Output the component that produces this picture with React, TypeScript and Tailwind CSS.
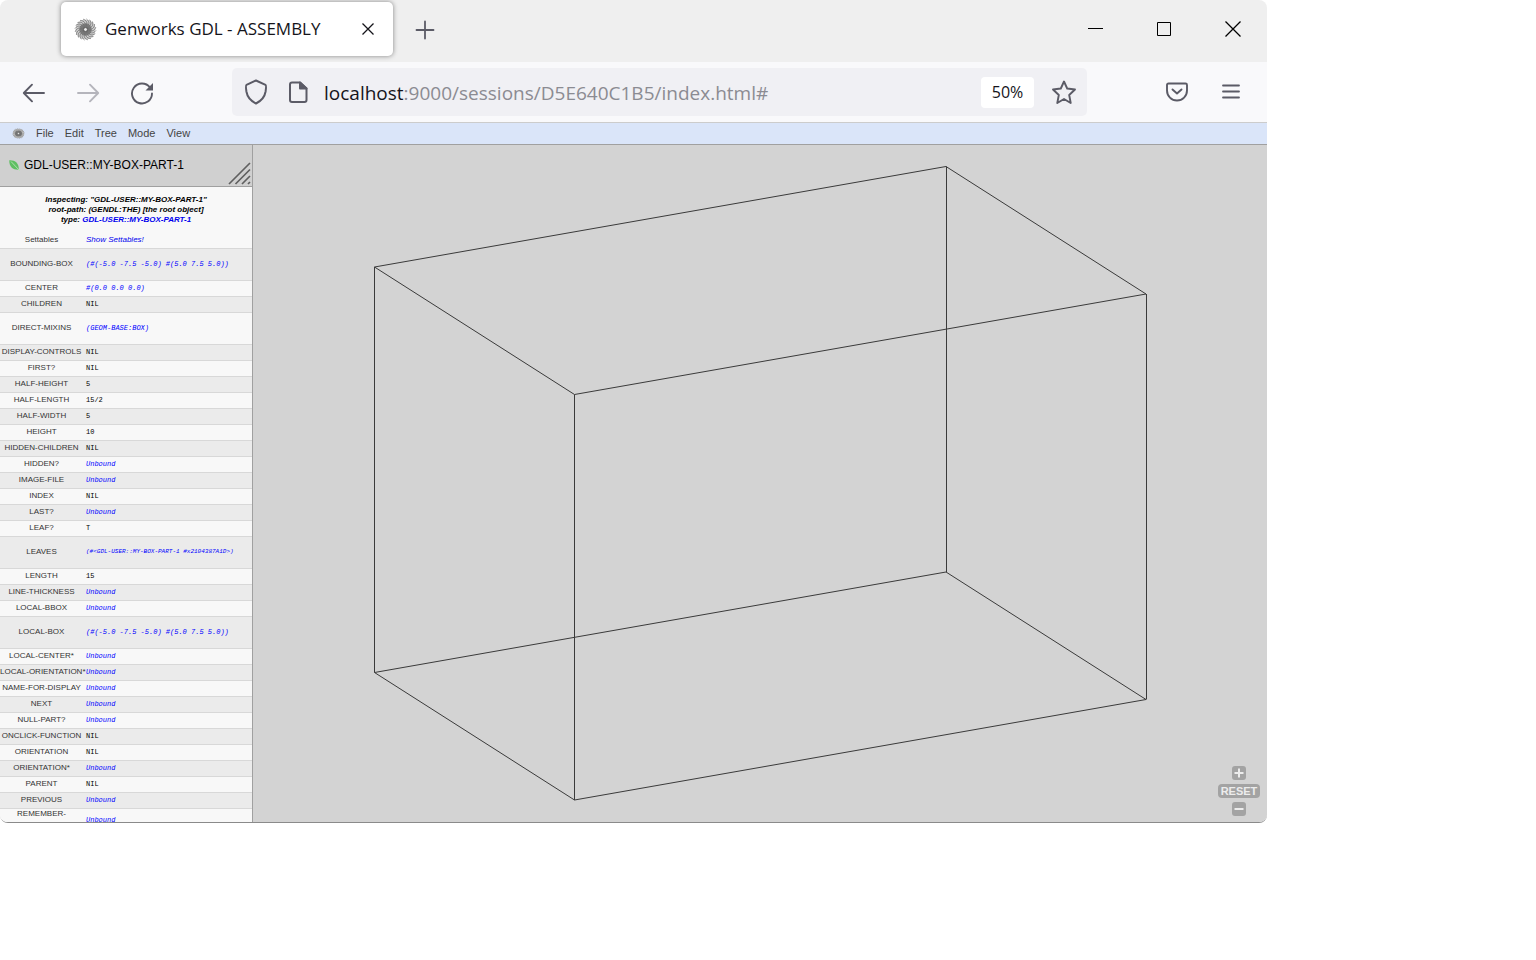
import React from "react";

type Row = { label: string; value: string; link?: boolean; tall?: boolean; long?: boolean };

const rows: Row[] = [
  { label: "BOUNDING-BOX", value: "(#(-5.0 -7.5 -5.0) #(5.0 7.5 5.0))", link: true, tall: true },
  { label: "CENTER", value: "#(0.0 0.0 0.0)", link: true },
  { label: "CHILDREN", value: "NIL" },
  { label: "DIRECT-MIXINS", value: "(GEOM-BASE:BOX)", link: true, tall: true },
  { label: "DISPLAY-CONTROLS", value: "NIL" },
  { label: "FIRST?", value: "NIL" },
  { label: "HALF-HEIGHT", value: "5" },
  { label: "HALF-LENGTH", value: "15/2" },
  { label: "HALF-WIDTH", value: "5" },
  { label: "HEIGHT", value: "10" },
  { label: "HIDDEN-CHILDREN", value: "NIL" },
  { label: "HIDDEN?", value: "Unbound", link: true },
  { label: "IMAGE-FILE", value: "Unbound", link: true },
  { label: "INDEX", value: "NIL" },
  { label: "LAST?", value: "Unbound", link: true },
  { label: "LEAF?", value: "T" },
  { label: "LEAVES", value: "(#<GDL-USER::MY-BOX-PART-1 #x2104387A1D>)", link: true, tall: true, long: true },
  { label: "LENGTH", value: "15" },
  { label: "LINE-THICKNESS", value: "Unbound", link: true },
  { label: "LOCAL-BBOX", value: "Unbound", link: true },
  { label: "LOCAL-BOX", value: "(#(-5.0 -7.5 -5.0) #(5.0 7.5 5.0))", link: true, tall: true },
  { label: "LOCAL-CENTER*", value: "Unbound", link: true },
  { label: "LOCAL-ORIENTATION*", value: "Unbound", link: true },
  { label: "NAME-FOR-DISPLAY", value: "Unbound", link: true },
  { label: "NEXT", value: "Unbound", link: true },
  { label: "NULL-PART?", value: "Unbound", link: true },
  { label: "ONCLICK-FUNCTION", value: "NIL" },
  { label: "ORIENTATION", value: "NIL" },
  { label: "ORIENTATION*", value: "Unbound", link: true },
  { label: "PARENT", value: "NIL" },
  { label: "PREVIOUS", value: "Unbound", link: true },
];

const petals = Array.from({ length: 20 }, (_, i) => i * 18);

function Rosette({ className }: { className: string }) {
  return (
    <svg viewBox="0 0 24 24" preserveAspectRatio="none" className={className} fill="none" stroke="#666" strokeWidth="0.7" aria-hidden="true">
      <circle cx="12" cy="12" r="10.5" fill="#cfcfcf" stroke="none" />
      <circle cx="12" cy="12" r="6.5" fill="#858585" stroke="none" />
      {petals.map((a) => (
        <path key={a} d="M12 10C16 8 17 4 13 1" transform={`rotate(${a} 12 12)`} />
      ))}
      <circle cx="12" cy="12" r="2" fill="#eee" stroke="#444" />
    </svg>
  );
}

function TitleBar() {
  return (
    <header className="flex h-[62px] items-start bg-[#efefef] pl-[61px] pt-[2px]">
      <div className="flex h-[54px] w-[332px] items-center rounded-[5px] bg-white pl-[13px] pr-4 shadow-[0_0_5px_rgba(0,0,0,0.45)]">
        <Rosette className="size-[23px]" />
        <span className="ml-2 flex-1 whitespace-nowrap text-[17px] text-[#15141a]">Genworks GDL - ASSEMBLY</span>
        <button aria-label="Close tab" className="flex size-[18px] items-center justify-center">
          <svg viewBox="0 0 12 12" className="size-3" stroke="#15141a" strokeWidth="1.3">
            <path d="M0.5 0.5L11.5 11.5M11.5 0.5L0.5 11.5" />
          </svg>
        </button>
      </div>
      <button aria-label="New tab" className="ml-[22px] mt-[18px]">
        <svg viewBox="0 0 20 20" className="size-5" stroke="#5b5b66" strokeWidth="1.8" strokeLinecap="round">
          <path d="M10 1.5V18.5M1.5 10H18.5" />
        </svg>
      </button>
      <div className="ml-auto flex items-center gap-[52px] pr-[25px] pt-[18px]">
        <button aria-label="Minimize">
          <svg viewBox="0 0 17 17" className="size-[17px]" stroke="#000">
            <path d="M1 8.5H16" />
          </svg>
        </button>
        <button aria-label="Maximize">
          <svg viewBox="0 0 17 17" className="size-[17px]" fill="none" stroke="#000">
            <path d="M1.5 2.5H14.5V15.5H1.5Z" />
          </svg>
        </button>
        <button aria-label="Close window">
          <svg viewBox="0 0 17 17" className="size-[17px]" stroke="#000" strokeWidth="1.3">
            <path d="M0.5 1.5L15.5 16.5M15.5 1.5L0.5 16.5" />
          </svg>
        </button>
      </div>
    </header>
  );
}

function AddressBar() {
  return (
    <nav className="flex h-[61px] items-center border-b border-[#ccc] bg-[#f9f9fb] pl-[22px] pr-[26px] text-[#5b5b66]">
      <button aria-label="Back">
        <svg viewBox="0 0 24 24" className="size-6" fill="none" stroke="currentColor" strokeWidth="1.9" strokeLinecap="round" strokeLinejoin="round">
          <path d="M22 13H2M10 4.7L1.8 13L10 21.3" />
        </svg>
      </button>
      <button aria-label="Forward" disabled className="ml-[30px] text-[#b5b5bc]">
        <svg viewBox="0 0 24 24" className="size-6" fill="none" stroke="currentColor" strokeWidth="1.9" strokeLinecap="round" strokeLinejoin="round">
          <path d="M2 13H22M14 4.7L22.2 13L14 21.3" />
        </svg>
      </button>
      <button aria-label="Reload" className="ml-[30px]">
        <svg viewBox="0 0 24 26" className="h-[26px] w-6" fill="none" stroke="currentColor" strokeWidth="1.9" strokeLinecap="round">
          <path d="M20 8.5A10 10 0 1 0 22 14.500" />
          <path d="M23 4V11.5H15.5Z" fill="currentColor" stroke="none" />
        </svg>
      </button>
      <div className="ml-[78px] flex h-12 min-w-0 flex-1 items-center rounded-[5px] bg-[#f0f0f4] pl-3 pr-[10px]">
        <svg viewBox="0 0 24 26" className="h-[26px] w-6 shrink-0" fill="none" stroke="currentColor" strokeWidth="2" strokeLinejoin="round">
          <path d="M12 1.5L21.5 5.8C22.5 6.3 22 9.5 21.6 12.5C20.7 18 17 22 12 24.5C7 22 3.3 18 2.4 12.5C2 9.5 1.5 6.3 2.5 5.8Z" />
        </svg>
        <svg viewBox="0 0 20 24" className="ml-5 h-6 w-5 shrink-0" fill="none" stroke="currentColor" strokeWidth="2" strokeLinejoin="round">
          <path d="M4 2.5H12L18.5 8.5V20C18.5 21.5 18 22 16.5 22H4C2.5 22 2 21.5 2 20V4.5C2 3 2.5 2.5 4 2.5Z" />
          <path d="M12 2.5V8.5H18.5Z" fill="currentColor" />
        </svg>
        <span className="ml-4 flex-1 whitespace-nowrap pt-[2px] text-[19px] text-[#8b8b92]">
          <span className="text-[#15141a]">localhost</span>:9000/sessions/D5E640C1B5/index.html#
        </span>
        <button className="h-[31px] w-[53px] rounded-[4px] bg-white text-[16px] text-[#15141a]">50%</button>
        <button aria-label="Bookmark this page" className="ml-[17px]">
          <svg viewBox="0 0 26 26" className="size-[26px]" fill="none" stroke="currentColor" strokeWidth="1.9" strokeLinejoin="round">
            <path d="M13 2.5L16.2 9.5L24 10.5L18.2 16L19.7 24L13 20L6.3 24L7.8 16L2 10.5L9.8 9.5Z" />
          </svg>
        </button>
      </div>
      <button aria-label="Save to Pocket" className="ml-[79px]">
        <svg viewBox="0 0 22 20" className="h-5 w-[22px]" fill="none" stroke="currentColor" strokeWidth="1.9" strokeLinecap="round" strokeLinejoin="round">
          <path d="M2.5 1.5H19.5Q21 1.5 21 3V8.5A10 10 0 0 1 1 8.5V3Q1 1.5 2.5 1.5Z" />
          <path d="M6.5 7.5L11 11.5L15.5 7.5" />
        </svg>
      </button>
      <button aria-label="Open menu" className="ml-[33px]">
        <svg viewBox="0 0 20 18" className="h-[18px] w-5" stroke="currentColor" strokeWidth="1.8" strokeLinecap="round">
          <path d="M2 2.5H18M2 8.5H18M2 14.5H18" />
        </svg>
      </button>
    </nav>
  );
}

function MenuBar() {
  return (
    <nav className="flex h-[22px] items-center gap-[11px] border-b border-[#a0a0a0] bg-[#dae5f9] pl-3 text-[11px] text-[#444]">
      <Rosette className="h-[11px] w-[13px]" />
      {["File", "Edit", "Tree", "Mode", "View"].map((item) => (
        <button key={item}>{item}</button>
      ))}
    </nav>
  );
}

function Inspector() {
  return (
    <aside className="w-[253px] shrink-0 overflow-hidden border-r border-[#a0a0a0] bg-[#f8f8f8] [contain:size]">
      <div className="flex h-[42px] items-center border-b border-[#a0a0a0] bg-[#d0d0d0] pl-[9px]">
        <svg viewBox="0 0 11 11" className="size-[11px]" aria-hidden="true">
          <path d="M0.3 0.3C6 0 10 3 9.8 9.8C4 10 0 7 0.3 0.3Z" fill="#5fbf62" />
          <path d="M2 1.5L10.8 10.8" stroke="#b5e3b5" strokeWidth="0.9" />
        </svg>
        <h1 className="ml-1 flex-1 whitespace-nowrap pb-[2px] text-[12px] text-black">GDL-USER::MY-BOX-PART-1</h1>
        <svg viewBox="0 0 24 24" className="mr-px size-6 self-end" stroke="#606060" strokeWidth="1.7" aria-hidden="true">
          <path d="M2 22L23 1M8.5 22L23 7.5M15 22L23 14M21 22L23 20" />
        </svg>
      </div>
      <div className="pb-[7px] pt-2 text-center text-[8px] font-bold italic leading-[10px] text-black">
        <p>Inspecting: "GDL-USER::MY-BOX-PART-1"</p>
        <p>root-path: (GENDL:THE) [the root object]</p>
        <p>
          type: <a href="#type" className="text-[#0000ee]">GDL-USER::MY-BOX-PART-1</a>
        </p>
      </div>
      <table className="w-full table-fixed border-collapse text-[8px] leading-[8px]">
        <colgroup>
          <col className="w-[83px]" />
          <col />
        </colgroup>
        <tbody>
          <tr className="h-4 border-b border-[#d8d8d8]">
            <th scope="row" className="p-0 font-normal text-[#333]">Settables</th>
            <td className="p-0 pl-[3px]">
              <a href="#settables" className="italic text-[#0000ee]">Show Settables!</a>
            </td>
          </tr>
          {rows.map((r) => (
            <tr key={r.label} className={`border-b border-[#d8d8d8] odd:bg-[#f8f8f8] even:bg-[#ebebeb] ${r.tall ? "h-8" : "h-4"}`}>
              <th scope="row" className="whitespace-nowrap p-0 font-normal text-[#333]">{r.label}</th>
              <td className={`whitespace-nowrap p-0 pl-[3px] font-['Liberation_Mono',monospace] text-black ${r.long ? "text-[6px]" : "text-[7px]"}`}>
                {r.link ? <a href="#value" className="italic text-[#0000ff]">{r.value}</a> : r.value}
              </td>
            </tr>
          ))}
          <tr className="h-6 bg-[#f8f8f8]">
            <th scope="row" className="p-0 pt-px align-top font-normal text-[#333]">REMEMBER-</th>
            <td className="p-0 pl-[3px] font-['Liberation_Mono',monospace] text-[7px]">
              <a href="#value" className="italic text-[#0000ff]">Unbound</a>
            </td>
          </tr>
        </tbody>
      </table>
    </aside>
  );
}

function Viewport() {
  return (
    <main className="relative min-w-0 flex-1 bg-[#d3d3d3]">
      <svg viewBox="253 145 1014 677" className="block w-full" fill="none" stroke="#3a3a3a" role="img" aria-label="Wireframe box">
        <path d="M374.5 267L946 166.5L1146 294L574.5 394.5Z" />
        <path d="M374.5 672.5L946 572L1146 699.5L574.5 800Z" />
        <path d="M374.5 267V672.5M946.5 166.5V572M1146.5 294V699.5M574.5 394.5V800" />
      </svg>
      <div className="absolute bottom-[6px] right-[7px] flex flex-col items-center gap-1 text-[#ececec]">
        <button aria-label="Zoom in" className="flex size-[14px] items-center justify-center rounded-[3px] bg-[#a3a3a3]">
          <svg viewBox="0 0 10 10" className="size-[10px]" stroke="currentColor" strokeWidth="2">
            <path d="M5 0.5V9.5M0.5 5H9.5" />
          </svg>
        </button>
        <button className="h-[14px] w-[42px] rounded-[4px] bg-[#a3a3a3] text-[11px] font-bold leading-[14px]">RESET</button>
        <button aria-label="Zoom out" className="flex size-[14px] items-center justify-center rounded-[3px] bg-[#a3a3a3]">
          <svg viewBox="0 0 10 10" className="size-[10px]" stroke="currentColor" strokeWidth="2">
            <path d="M0.5 5H9.5" />
          </svg>
        </button>
      </div>
    </main>
  );
}

export default function App() {
  return (
    <div className="min-h-screen bg-white font-['Liberation_Sans',Arial,sans-serif]">
      <div className="w-full max-w-[1267px] overflow-hidden rounded-[8px] border-b border-[#8a8a8a]">
        <div className="font-['Open_Sans','Noto_Sans',sans-serif]">
          <TitleBar />
          <AddressBar />
        </div>
        <MenuBar />
        <div className="flex items-stretch">
          <Inspector />
          <Viewport />
        </div>
      </div>
    </div>
  );
}
